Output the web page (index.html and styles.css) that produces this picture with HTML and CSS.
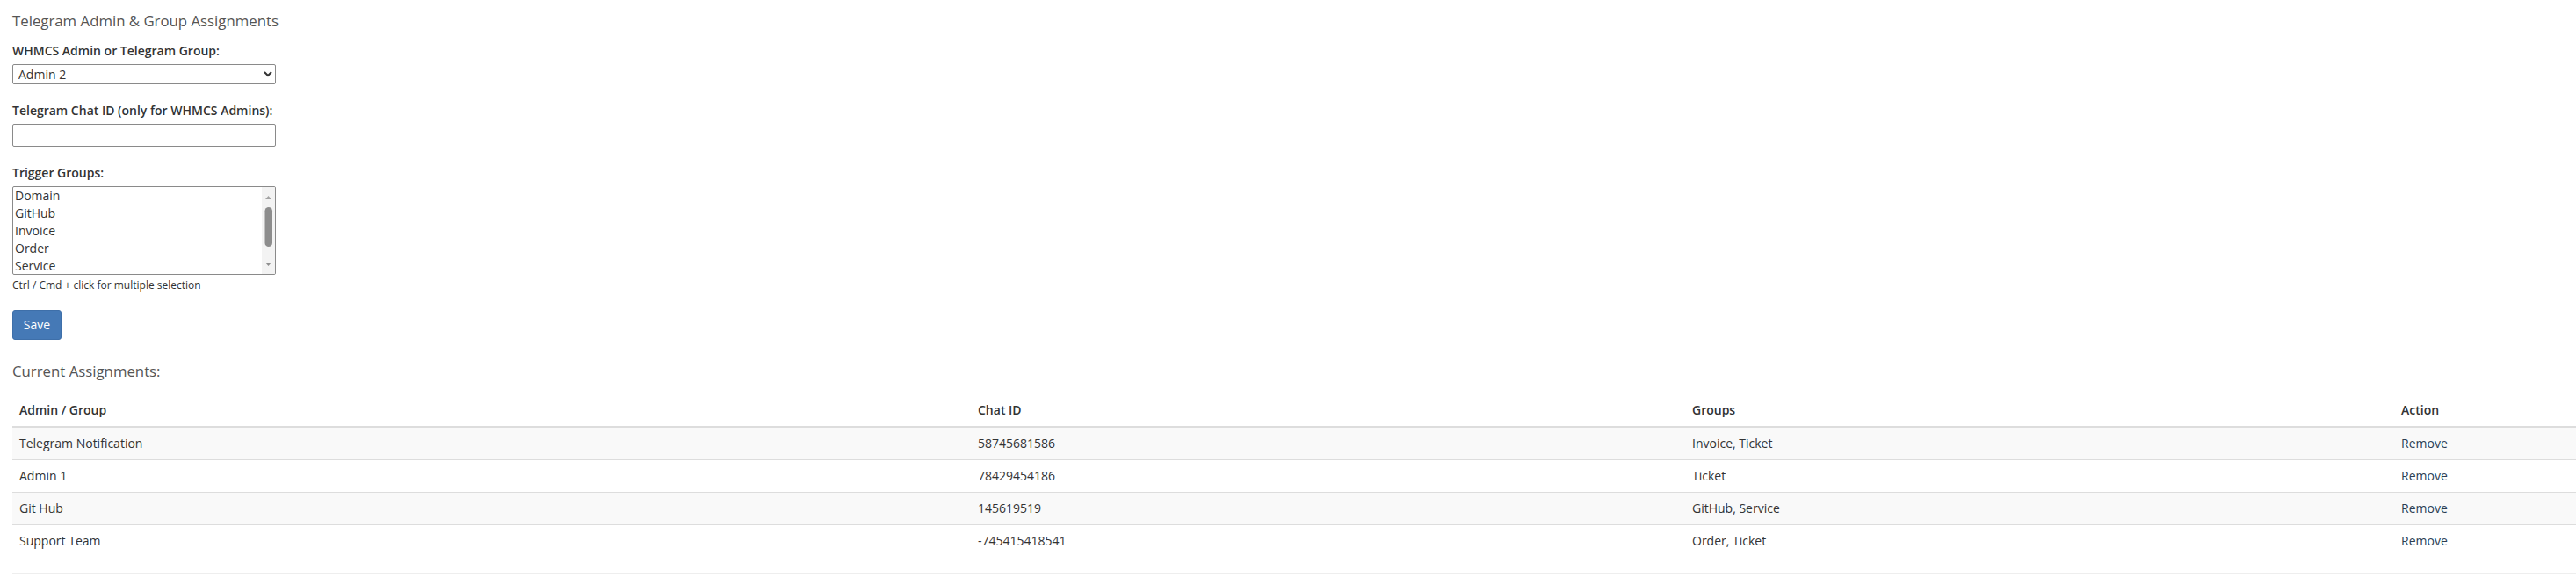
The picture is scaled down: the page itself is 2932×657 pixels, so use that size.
FILE: index.html
```html
<!DOCTYPE html>
<html>
<head>
<meta charset="utf-8">
<link rel="stylesheet" href="styles.css">
</head>
<body>
<div class="page">
  <h2 class="title">Telegram Admin &amp; Group Assignments</h2>
  <form class="form">
    <div class="form-group">
      <label class="label" for="who">WHMCS Admin or Telegram Group:</label>
      <select id="who" class="select">
        <option>Admin 2</option>
        <option>Admin 1</option>
      </select>
    </div>
    <div class="form-group">
      <label class="label" for="chat">Telegram Chat ID (only for WHMCS Admins):</label>
      <input id="chat" class="input" type="text">
    </div>
    <div class="form-group group-last">
      <div class="label">Trigger Groups:</div>
      <div class="listbox" role="listbox" aria-multiselectable="true">
        <div class="options">
          <div class="option" role="option">Domain</div>
          <div class="option" role="option">GitHub</div>
          <div class="option" role="option">Invoice</div>
          <div class="option" role="option">Order</div>
          <div class="option" role="option">Service</div>
        </div>
        <div class="scrollbar">
          <svg class="sb-svg" width="15" height="99" viewBox="0 0 15 99">
            <polygon points="4,14 11,14 7.5,10" fill="#a3a3a3"/>
            <rect x="3.5" y="23" width="8.5" height="45" rx="4.25" fill="#8d8d8d"/>
            <polygon points="4,86 11,86 7.5,90" fill="#8f8f8f"/>
          </svg>
        </div>
      </div>
      <div class="hint">Ctrl / Cmd + click for multiple selection</div>
    </div>
    <button type="button" class="btn">Save</button>
  </form>
  <h3 class="subtitle">Current Assignments:</h3>
  <table class="table">
    <colgroup>
      <col class="c1"><col class="c2"><col class="c3"><col class="c4">
    </colgroup>
    <thead>
      <tr><th>Admin / Group</th><th>Chat ID</th><th>Groups</th><th>Action</th></tr>
    </thead>
    <tbody>
      <tr class="odd"><td>Telegram Notification</td><td>58745681586</td><td>Invoice, Ticket</td><td><a class="link" href="#">Remove</a></td></tr>
      <tr><td>Admin 1</td><td>78429454186</td><td>Ticket</td><td><a class="link" href="#">Remove</a></td></tr>
      <tr class="odd"><td>Git Hub</td><td>145619519</td><td>GitHub, Service</td><td><a class="link" href="#">Remove</a></td></tr>
      <tr><td>Support Team</td><td>-745415418541</td><td>Order, Ticket</td><td><a class="link" href="#">Remove</a></td></tr>
    </tbody>
  </table>
  <hr class="rule">
</div>
</body>
</html>
```
FILE: styles.css
```css
html, body {
  margin: 0;
  padding: 0;
  background: #fff;
}
body {
  font-family: "Open Sans", "Liberation Sans", sans-serif;
  font-size: 14px;
  color: #333;
}
.page {
  padding: 14px 0 0 14px;
}
.title {
  margin: 0 0 15px 0;
  font-size: 16.8px;
  font-weight: 400;
  line-height: 19px;
  color: #555;
}
.form {
  margin: 0;
}
.form-group {
  margin-bottom: 20px;
}
.label {
  display: block;
  font-weight: 600;
  font-size: 14px;
  line-height: 20px;
  margin-bottom: 5px;
  color: #333;
}
.select {
  display: block;
  box-sizing: border-box;
  width: 300px;
  height: 23px;
  font-family: "Open Sans", sans-serif;
  font-size: 14px;
  color: #333;
  border: 1px solid #8a8a8a;
  border-radius: 2px;
  background: #fff;
  padding: 0 2px;
  margin: 0;
}
.input {
  display: block;
  box-sizing: border-box;
  width: 300px;
  height: 26px;
  border: 1px solid #8a8a8a;
  border-radius: 2px;
  margin: 0;
  font-family: "Open Sans", sans-serif;
  font-size: 14px;
}
.listbox {
  display: flex;
  box-sizing: border-box;
  width: 300px;
  height: 101px;
  border: 1px solid #8a8a8a;
  border-radius: 2px;
  overflow: hidden;
  background: #fff;
}
.options {
  flex: 1;
  padding: 0 2px;
}
.option {
  font-size: 14px;
  line-height: 20px;
  height: 20px;
  color: #333;
  white-space: nowrap;
}
.scrollbar {
  width: 15px;
  height: 99px;
  background: #f3f3f3;
}
.sb-svg {
  display: block;
}
.group-last {
  margin-bottom: 20px;
}
.hint {
  margin-top: 3px;
  font-size: 12px;
  line-height: 17px;
  color: #333;
}
.btn {
  display: block;
  box-sizing: border-box;
  width: 56px;
  height: 34px;
  padding: 6px 0;
  font-family: "Open Sans", sans-serif;
  font-size: 14px;
  line-height: 20px;
  color: #fff;
  background: #4579b6;
  border: 1px solid #3e6fa9;
  border-radius: 3px;
  text-align: center;
}
.subtitle {
  margin: 26px 0 17px 0;
  font-size: 16.8px;
  font-weight: 400;
  line-height: 19px;
  color: #555;
}
.table {
  width: 2918px;
  border-collapse: collapse;
  border-spacing: 0;
  table-layout: fixed;
  margin-bottom: 19px;
}
.c1 { width: 1091px; }
.c2 { width: 813px; }
.c3 { width: 807px; }
.c4 { width: 207px; }
.table th {
  text-align: left;
  font-weight: 600;
  font-size: 14px;
  padding: 8px;
  line-height: 20px;
  border-bottom: 2px solid #ddd;
}
.table td {
  padding: 8px;
  font-size: 14px;
  line-height: 20px;
  border-top: 1px solid #ddd;
}
.table tbody tr:first-child td {
  border-top: 0;
}
.table tr.odd td {
  background: #f9f9f9;
}
.link {
  color: #2d3e52;
  text-decoration: none;
}
.rule {
  margin: 0;
  border: 0;
  border-top: 1px solid #eee;
  width: 2918px;
  height: 0;
}
```
